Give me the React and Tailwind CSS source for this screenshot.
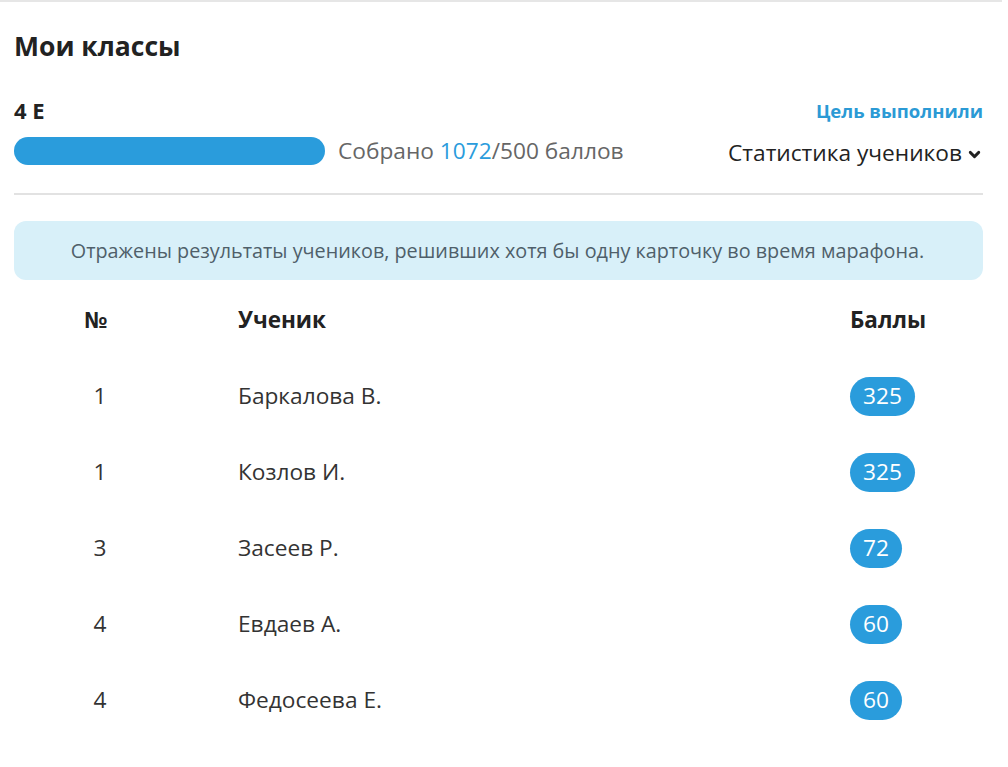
import { ChevronDown } from 'lucide-react'

const students = [
  { place: 1, name: 'Баркалова В.', score: 325 },
  { place: 1, name: 'Козлов И.', score: 325 },
  { place: 3, name: 'Засеев Р.', score: 72 },
  { place: 4, name: 'Евдаев А.', score: 60 },
  { place: 4, name: 'Федосеева Е.', score: 60 },
]

export default function App() {
  return (
    <div className="min-h-[767px] bg-white font-['Open_Sans',sans-serif] text-[#222]">
      <div className="h-[2px] bg-[#e6e6e6] mr-[6px]" />

      <div className="px-[14px] pt-[27px]">
        {/* Title */}
        <h1 className="text-[26.5px] leading-[34px] font-bold text-[#222]">Мои классы</h1>

        {/* Class header */}
        <div className="mt-[33px] flex items-end justify-between h-[28px] mr-[11px]">
          <span className="text-[22px] leading-[28px] font-bold text-[#222]">4 Е</span>
          <span className="text-[18.5px] leading-[26px] font-bold text-[#2b9ad5]">Цель выполнили</span>
        </div>

        {/* Progress */}
        <div className="mt-[12px] flex items-center h-[30px] mr-[11px]">
          <div className="w-[311px] h-[28px] rounded-full bg-[#2a9cdc]" />
          <span className="ml-[13px] text-[22.7px] leading-[30px] text-[#666]">
            Собрано <span className="text-[#2a9cdc]">1072</span>/500 баллов
          </span>
          <button className="ml-auto mt-[4px] flex items-center gap-[4px] text-[22.7px] leading-[30px] text-[#222]">
            Статистика учеников
            <ChevronDown size={17} strokeWidth={4} className="mt-[2px]" />
          </button>
        </div>

        <div className="mt-[27px] mr-[11px] h-[2px] bg-[#e2e2e2]" />

        {/* Info */}
        <div className="mt-[26px] mr-[11px] h-[59px] rounded-[12px] bg-[#d8f0f9] flex items-center justify-center">
          <p className="text-[19.8px] text-[#4f5f6a] pr-[2px]">
            Отражены результаты учеников, решивших хотя бы одну карточку во время марафона.
          </p>
        </div>

        {/* Table */}
        <div className="mt-[2px]">
          <div className="flex items-center h-[76px] font-bold text-[22.5px] text-[#222]">
            <div className="w-[164px] text-center">№</div>
            <div className="ml-[60px] w-[612px]">Ученик</div>
            <div>Баллы</div>
          </div>
          {students.map((s, i) => (
            <div key={i} className="flex items-center h-[76px] text-[22.7px] text-[#333]">
              <div className="w-[172px] text-center">{s.place}</div>
              <div className="ml-[52px] w-[612px]">{s.name}</div>
              <div>
                <span className="inline-flex items-center justify-center h-[39px] px-[13px] rounded-full bg-[#2a9cdc] text-white text-[22.7px]">
                  {s.score}
                </span>
              </div>
            </div>
          ))}
        </div>
      </div>
    </div>
  )
}
